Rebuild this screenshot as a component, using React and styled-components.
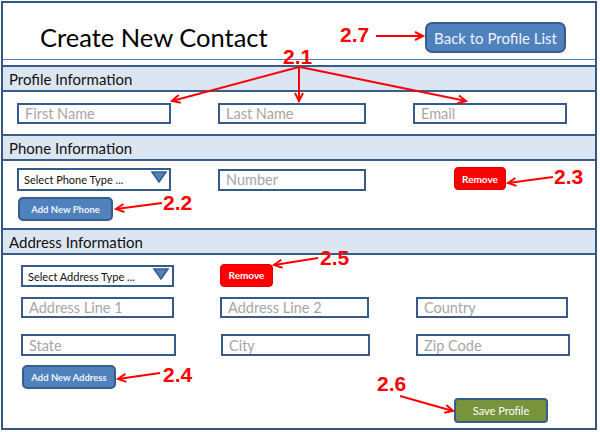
import styled, { createGlobalStyle } from "styled-components";

const GlobalStyle = createGlobalStyle`
  html, body { margin: 0; padding: 0; background: #fff; }
  body { font-family: Lato, "Liberation Sans", sans-serif; }
`;

const Page = styled.div`
  position: relative;
  width: 600px;
  height: 432px;
  box-sizing: border-box;
  padding: 1px 0 0 1px;
  overflow: hidden;
`;

const Frame = styled.div`
  width: 596px;
  height: 429px;
  box-sizing: border-box;
  border: 2px solid #34567f;
  display: flex;
  flex-direction: column;
`;

const Header = styled.header`
  height: 57px;
  box-sizing: border-box;
  border-bottom: 1px solid #4f81bd;
  display: flex;
  align-items: flex-end;
  padding: 0 29px 6px 37px;
`;

const Title = styled.h1`
  margin: 0 0 1px;
  font-size: 25.5px;
  line-height: 30px;
  font-weight: 400;
  color: #000;
`;

const Button = styled.button`
  box-sizing: border-box;
  width: ${(p) => p.$w}px;
  height: ${(p) => p.$h}px;
  margin: ${(p) => p.$m || "0"};
  padding: 0;
  border: ${(p) => (p.$tone === "red" ? "1px solid #e00000" : "2px solid #385d8a")};
  border-radius: ${(p) => p.$r || 4}px;
  background: ${(p) =>
    p.$tone === "red" ? "#ff0000" : p.$tone === "green" ? "#77933c" : "#4f81bd"};
  color: ${(p) => (p.$tone === "blue" ? "#eef3fa" : "#fff")};
  font-family: Lato, "Liberation Sans", sans-serif;
  font-size: ${(p) => p.$fs}px;
  font-weight: ${(p) => (p.$bold ? 700 : 400)};
  display: flex;
  align-items: center;
  justify-content: center;
  flex-shrink: 0;
`;

const Band = styled.div`
  margin-top: ${(p) => p.$gap || 0}px;
  height: 27px;
  box-sizing: border-box;
  border-top: 2px solid #3a5d88;
  border-bottom: 2px solid #3a5d88;
  background: #dce6f2;
  padding-left: 6px;
  display: flex;
  align-items: center;
  font-size: 15px;
  color: #111;
`;

const Body = styled.div`
  box-sizing: border-box;
  display: flex;
  flex-direction: column;
  align-items: flex-start;
  padding: ${(p) => p.$pad};
  height: ${(p) => (p.$h ? `${p.$h}px` : "auto")};
  flex: ${(p) => (p.$h ? "none" : 1)};
`;

const Row = styled.div`
  display: flex;
  align-items: center;
  gap: ${(p) => p.$gap ?? 47}px;
  margin-top: ${(p) => p.$top || 0}px;
`;

const Field = styled.input`
  box-sizing: border-box;
  width: ${(p) => p.$w}px;
  height: ${(p) => p.$h || 21}px;
  margin: 0 0 0 ${(p) => p.$ml || 0}px;
  border: 2px solid #365b89;
  border-radius: 0;
  padding: 0 6px;
  background: #fff;
  font-family: Lato, "Liberation Sans", sans-serif;
  font-size: 14.5px;
  outline: none;
  &::placeholder {
    color: #a6a6a6;
  }
`;

const Select = styled.div`
  box-sizing: border-box;
  width: ${(p) => p.$w}px;
  height: ${(p) => p.$h}px;
  border: 2px solid #365b89;
  padding: 0 ${(p) => p.$pr}px 0 5px;
  display: flex;
  align-items: center;
  justify-content: space-between;
  font-size: 11px;
  color: #111;
  & > svg {
    align-self: flex-start;
    margin-top: 1px;
  }
`;

const Overlay = styled.svg`
  position: absolute;
  left: 0;
  top: 0;
  pointer-events: none;
`;

const Callout = styled.span`
  position: absolute;
  left: ${(p) => p.$x}px;
  top: ${(p) => p.$y}px;
  font-family: "Liberation Sans", Arial, sans-serif;
  font-weight: 700;
  font-size: 21px;
  line-height: 1;
  color: #ff0000;
`;

function SelectBox({ label, w, h, pr }) {
  return (
    <Select $w={w} $h={h} $pr={pr}>
      <span>{label}</span>
      <svg width="16" height="12" viewBox="0 0 16 12">
        <polygon points="1,1 15,1 8,11" fill="#4f81bd" stroke="#385d8a" strokeWidth="1.5" />
      </svg>
    </Select>
  );
}

const arrows = [
  [376, 36, 423, 36],
  [299, 67, 172, 101],
  [299, 67, 299, 101],
  [300, 67, 466, 101],
  [162, 203, 116, 209],
  [553, 177, 508, 183],
  [318, 258, 274, 265],
  [160, 373, 118, 379],
  [400, 396, 453, 411],
];

const labels = [
  ["2.7", 340, 24],
  ["2.1", 283, 46],
  ["2.2", 163, 192],
  ["2.3", 554, 166],
  ["2.5", 320, 247],
  ["2.4", 163, 364],
  ["2.6", 377, 373],
];

export default function App() {
  return (
    <Page>
      <GlobalStyle />
      <Frame>
        <Header>
          <Title>Create New Contact</Title>
          <Button $tone="blue" $w={141} $h={31} $r={7} $fs={15} $m="0 0 0 auto">
            Back to Profile List
          </Button>
        </Header>

        <Band $gap={5}>Profile Information</Band>
        <Body $h={42} $pad="11px 0 0 14px">
          <Row>
            <Field $w={154} placeholder="First Name" />
            <Field $w={148} placeholder="Last Name" />
            <Field $w={154} placeholder="Email" />
          </Row>
        </Body>

        <Band>Phone Information</Band>
        <Body $h={67} $pad="7px 0 0 14px">
          <Row>
            <SelectBox label="Select Phone Type ..." w={154} h={23} pr={2} />
            <Field $w={148} $h={22} placeholder="Number" />
            <Button $tone="red" $w={52} $h={23} $r={4} $fs={10} $bold $m="-2px 0 0 41px">
              Remove
            </Button>
          </Row>
          <Button $tone="blue" $w={95} $h={24} $r={5} $fs={9.5} $bold $m="6px 0 0 1px">
            Add New Phone
          </Button>
        </Body>

        <Band>Address Information</Band>
        <Body $pad="10px 0 0 18px">
          <Row $gap={46}>
            <SelectBox label="Select Address Type ..." w={153} h={22} pr={3} />
            <Button $tone="red" $w={53} $h={23} $r={4} $fs={10} $bold $m="-2px 0 0 0">
              Remove
            </Button>
          </Row>
          <Row $top={10} $gap={46}>
            <Field $w={153} placeholder="Address Line 1" />
            <Field $w={149} placeholder="Address Line 2" />
            <Field $w={152} $ml={1} placeholder="Country" />
          </Row>
          <Row $top={16} $gap={45}>
            <Field $w={155} $h={22} placeholder="State" />
            <Field $w={149} $h={22} placeholder="City" />
            <Field $w={154} $h={22} $ml={1} placeholder="Zip Code" />
          </Row>
          <Button $tone="blue" $w={94} $h={24} $r={5} $fs={9.5} $bold $m="9px 0 0 1px">
            Add New Address
          </Button>
          <Button $tone="green" $w={94} $h={25} $r={4} $fs={11} $m="9px 0 0 433px">
            Save Profile
          </Button>
        </Body>
      </Frame>

      <Overlay width="600" height="432" viewBox="0 0 600 432">
        <defs>
          <marker
            id="head"
            markerUnits="userSpaceOnUse"
            markerWidth="12"
            markerHeight="12"
            refX="9"
            refY="5"
            orient="auto"
          >
            <path d="M1,1 L9,5 L1,9" fill="none" stroke="#ff0000" strokeWidth="2" />
          </marker>
        </defs>
        {arrows.map(([x1, y1, x2, y2], i) => (
          <line
            key={i}
            x1={x1}
            y1={y1}
            x2={x2}
            y2={y2}
            stroke="#ff0000"
            strokeWidth="2"
            markerEnd="url(#head)"
          />
        ))}
      </Overlay>
      {labels.map(([t, x, y]) => (
        <Callout key={t} $x={x} $y={y}>
          {t}
        </Callout>
      ))}
    </Page>
  );
}
